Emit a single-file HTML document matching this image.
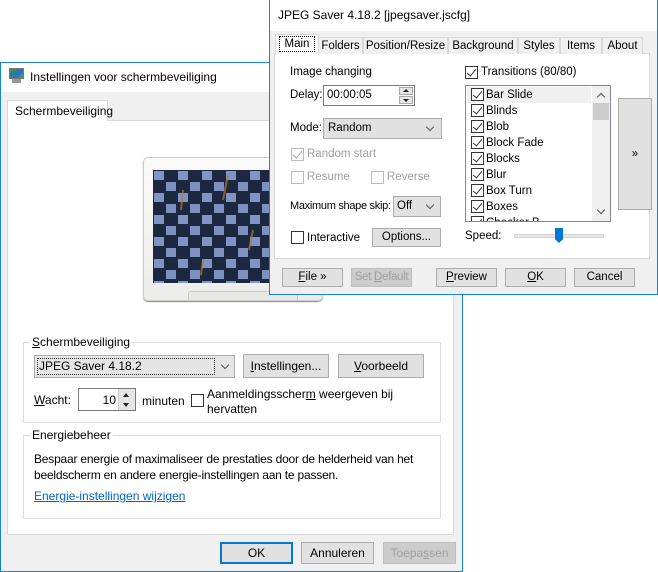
<!DOCTYPE html>
<html><head><meta charset="utf-8"><style>
*{box-sizing:border-box;margin:0;padding:0}
body{width:658px;height:572px;background:#fff;position:relative;overflow:hidden;font-family:"Liberation Sans",sans-serif;font-size:12px;color:#000}
.a{position:absolute;white-space:nowrap}
.btn{position:absolute;background:#e1e1e1;border:1px solid #adadad;text-align:center;line-height:18px;white-space:nowrap}
.cb{position:absolute;width:13px;height:13px;border:1px solid #333;background:#fff}
.ck::after{content:"";position:absolute;left:3px;top:0px;width:4px;height:8px;border:solid #333;border-width:0 1.5px 1.5px 0;transform:rotate(40deg)}
.dis{color:#a0a0a0}
.cbd{border-color:#bcbcbc}
.cbd.ck::after{border-color:#a8a8a8}
.tab{position:absolute;top:37px;height:17px;background:#f0f0f0;border:1px solid #d9d9d9;border-bottom:none;text-align:center;line-height:16px}
.chev{position:absolute;width:6px;height:6px;border:solid #555;border-width:0 1px 1px 0;transform:rotate(45deg)}
.li{position:absolute;left:471px;height:16px;line-height:16px;padding-left:15px}
.li::before{content:"";position:absolute;left:0;top:1px;width:13px;height:13px;border:1px solid #333;background:#fff;box-sizing:border-box}
.li::after{content:"";position:absolute;left:4px;top:2px;width:4px;height:8px;border:solid #333;border-width:0 1.5px 1.5px 0;transform:rotate(40deg)}
.fw{font-size:11.5px}
.bw{font-size:12px}
</style></head><body>

<!-- back window -->
<div class="a" style="left:0;top:62px;width:463px;height:510px;border:1px solid #1883d7;background:#f0f0f0"></div>
<div class="a" style="left:1px;top:63px;width:461px;height:29px;background:#fff"></div>
<div class="a" style="left:9px;top:68px;width:15px;height:11px;background:linear-gradient(135deg,#3a9a3a,#2a6ad0 60%,#49b04a);border:1px solid #777"></div>
<div class="a" style="left:12px;top:79px;width:9px;height:4px;background:#999"></div>
<div class="a" style="left:30px;top:70px;font-size:12px">Instellingen voor schermbeveiliging</div>
<div class="a" style="left:7px;top:120px;width:447px;height:415px;background:#fff;border:1px solid #d9d9d9"></div>
<div class="a bw" style="left:7px;top:100px;width:101px;height:21px;background:#fff;border:1px solid #d9d9d9;border-bottom:none;padding:3px 0 0 7px">Schermbeveiliging</div>

<!-- monitor -->
<div class="a" style="left:143px;top:157px;width:180px;height:144px;background:linear-gradient(#fbfbf9,#ecece8);border:1px solid #cfcfcc;border-radius:5px;box-shadow:0 1px 1px #888"></div>
<div class="a" style="left:188px;top:291px;width:110px;height:9px;background:#e8e8e6;border:1px solid #c8c8c8;border-bottom:none;border-radius:3px 3px 0 0"></div>
<svg class="a" style="left:153px;top:170px" width="130" height="113">
<defs><pattern id="p" width="24" height="22" patternUnits="userSpaceOnUse">
<rect width="24" height="22" fill="#1c2740"/>
<rect x="1" y="1" width="10" height="9" fill="#8094c6"/>
<rect x="13" y="12" width="10" height="9" fill="#7d90c0"/>
</pattern></defs>
<rect width="130" height="113" fill="url(#p)"/>
<path d="M75 5 L70 30 M30 20 L28 40 M100 60 L96 80 M50 90 L48 105" stroke="#b07a30" stroke-width="2" opacity=".7"/>
</svg>

<!-- group 1 -->
<div class="a" style="left:23px;top:342px;width:418px;height:81px;border:1px solid #dcdcdc"></div>
<div class="a bw" style="left:30px;top:335px;background:#fff;padding:0 2px"><u>S</u>chermbeveiliging</div>
<div class="a" style="left:34px;top:355px;width:201px;height:23px;background:#e5e5e5;border:1px solid #adadad"></div>
<div class="a bw" style="left:37px;top:358px;width:178px;height:17px;border:1px dotted #333;padding-left:1px;line-height:15px">JPEG Saver 4.18.2</div>
<div class="chev" style="left:222px;top:362px"></div>
<div class="btn bw" style="left:243px;top:354px;width:86px;height:24px;line-height:22px"><u>I</u>nstellingen...</div>
<div class="btn bw" style="left:338px;top:354px;width:86px;height:24px;line-height:22px"><u>V</u>oorbeeld</div>
<div class="a bw" style="left:34px;top:393px"><u>W</u>acht:</div>
<div class="a" style="left:78px;top:388px;width:58px;height:23px;border:1px solid #7a7a7a;background:#fff"></div>
<div class="a bw" style="left:84px;top:393px;width:32px;text-align:right">10</div>
<div class="a" style="left:118px;top:389px;width:17px;height:21px;background:#e5e5e5;border-left:1px solid #ccc"></div>
<div class="a" style="left:123px;top:393px;border:3px solid transparent;border-bottom:4px solid #222;border-top:none"></div>
<div class="a" style="left:123px;top:403px;border:3px solid transparent;border-top:4px solid #222;border-bottom:none"></div>
<div class="a bw" style="left:142px;top:394px">minuten</div>
<div class="cb" style="left:191px;top:394px"></div>
<div class="a bw" style="left:207px;top:387px;line-height:15px">Aanmeldingsscher<u>m</u> weergeven bij<br>hervatten</div>

<!-- group 2 -->
<div class="a" style="left:23px;top:435px;width:418px;height:84px;border:1px solid #dcdcdc"></div>
<div class="a bw" style="left:30px;top:428px;background:#fff;padding:0 2px">Energiebeheer</div>
<div class="a bw" style="left:34px;top:451px;line-height:16px;letter-spacing:-0.2px">Bespaar energie of maximaliseer de prestaties door de helderheid van het<br>beeldscherm en andere energie-instellingen aan te passen.</div>
<div class="a bw" style="left:34px;top:489px;color:#0066cc;text-decoration:underline">Energie-instellingen wijzigen</div>

<div class="btn bw" style="left:220px;top:542px;width:73px;height:22px;border:2px solid #0078d7;line-height:18px">OK</div>
<div class="btn bw" style="left:301px;top:542px;width:73px;height:22px;line-height:20px">Annuleren</div>
<div class="btn dis bw" style="left:383px;top:542px;width:73px;height:22px;line-height:20px;background:#ccc;border-color:#bfbfbf">Toepa<u>s</u>sen</div>

<!-- front window -->
<div class="a" style="left:269px;top:-1px;width:389px;height:296px;border:1px solid #1883d7;background:#f0f0f0"></div>
<div class="a" style="left:270px;top:0;width:387px;height:31px;background:#fff"></div>
<div class="a" style="left:278px;top:8px;font-size:12px">JPEG Saver 4.18.2 [jpegsaver.jscfg]</div>
<div class="a" style="left:274px;top:53px;width:376px;height:206px;background:#fff;border:1px solid #d9d9d9"></div>
<div class="fw">
<div class="tab" style="left:318px;width:45px">Folders</div>
<div class="tab" style="left:363px;width:85px">Position/Resize</div>
<div class="tab" style="left:448px;width:70px">Background</div>
<div class="tab" style="left:518px;width:42px">Styles</div>
<div class="tab" style="left:560px;width:42px">Items</div>
<div class="tab" style="left:602px;width:41px">About</div>
<div class="a" style="left:275px;top:34px;width:44px;height:21px;background:#fff;border:1px solid #d9d9d9;border-bottom:none"></div>
<div class="a" style="left:279px;top:36px;width:36px;height:16px;border:1px dotted #000;line-height:14px;text-align:center">Main</div>

<div class="a" style="left:290px;top:66px">Image changing</div>
<div class="a" style="left:290px;top:89px">Delay:</div>
<div class="a" style="left:323px;top:85px;width:92px;height:21px;border:1px solid #7a7a7a;background:#fff;padding:3px 0 0 3px">00:00:05</div>
<div class="a" style="left:398px;top:86px;width:16px;height:19px;background:#fff"></div>
<div class="a" style="left:399px;top:87px;width:14px;height:8px;background:#e5e5e5;border:1px solid #aaa"></div>
<div class="a" style="left:399px;top:96px;width:14px;height:8px;background:#e5e5e5;border:1px solid #aaa"></div>
<div class="a" style="left:403px;top:89px;border:3px solid transparent;border-bottom:3px solid #222;border-top:none"></div>
<div class="a" style="left:403px;top:99px;border:3px solid transparent;border-top:3px solid #222;border-bottom:none"></div>
<div class="a" style="left:290px;top:122px">Mode:</div>
<div class="a" style="left:323px;top:118px;width:119px;height:21px;background:#e1e1e1;border:1px solid #adadad;padding:3px 0 0 4px">Random</div>
<div class="chev" style="left:427px;top:124px"></div>
<div class="cb cbd ck" style="left:291px;top:148px"></div>
<div class="a dis" style="left:307px;top:148px">Random start</div>
<div class="cb cbd" style="left:291px;top:171px"></div>
<div class="a dis" style="left:307px;top:171px">Resume</div>
<div class="cb cbd" style="left:371px;top:171px"></div>
<div class="a dis" style="left:387px;top:171px">Reverse</div>
<div class="a" style="left:290px;top:200px;font-size:11px;letter-spacing:-0.3px">Maximum shape skip:</div>
<div class="a" style="left:393px;top:196px;width:48px;height:21px;background:#e1e1e1;border:1px solid #adadad;padding:3px 0 0 3px">Off</div>
<div class="chev" style="left:427px;top:202px"></div>
<div class="cb" style="left:291px;top:231px"></div>
<div class="a" style="left:307px;top:232px">Interactive</div>
<div class="btn" style="left:372px;top:228px;width:69px;height:19px;line-height:16px">Options...</div>

<div class="cb ck" style="left:465px;top:66px"></div>
<div class="a" style="left:481px;top:66px">Transitions (80/80)</div>
<div class="a" style="left:465px;top:85px;width:146px;height:137px;border:1px solid #828790;background:#fff"></div>
<div class="a" style="left:467px;top:87px;width:124px;height:16px;background:#f0f0f0"></div>
<div class="li" style="top:87px">Bar Slide</div>
<div class="li" style="top:103px">Blinds</div>
<div class="li" style="top:119px">Blob</div>
<div class="li" style="top:135px">Block Fade</div>
<div class="li" style="top:151px">Blocks</div>
<div class="li" style="top:167px">Blur</div>
<div class="li" style="top:183px">Box Turn</div>
<div class="li" style="top:199px">Boxes</div>
<div class="a" style="left:466px;top:215px;width:126px;height:6px;overflow:hidden"><div class="li" style="left:5px;top:0">Checker B</div></div>
<div class="a" style="left:592px;top:86px;width:18px;height:135px;background:#f0f0f0"></div>
<div class="chev" style="left:598px;top:94px;transform:rotate(225deg)"></div>
<div class="a" style="left:593px;top:103px;width:16px;height:17px;background:#cdcdcd"></div>
<div class="chev" style="left:598px;top:207px"></div>
<div class="btn" style="left:618px;top:98px;width:34px;height:112px;line-height:110px">»</div>
<div class="a" style="left:465px;top:230px">Speed:</div>
<div class="a" style="left:514px;top:234px;width:90px;height:4px;background:#e7e7e7;border:1px solid #d6d6d6"></div>
<div class="a" style="left:555px;top:228px;width:8px;height:15px;background:#0078d7;clip-path:polygon(0 0,100% 0,100% 75%,50% 100%,0 75%)"></div>

<div class="btn" style="left:282px;top:268px;width:61px;height:19px;line-height:17px"><u>F</u>ile »</div>
<div class="btn dis" style="left:351px;top:268px;width:61px;height:19px;line-height:17px;background:#ccc;border-color:#bfbfbf;letter-spacing:-0.3px">Set <u>D</u>efault</div>
<div class="btn" style="left:436px;top:268px;width:61px;height:19px;line-height:17px"><u>P</u>review</div>
<div class="btn" style="left:505px;top:268px;width:61px;height:19px;line-height:17px"><u>O</u>K</div>
<div class="btn" style="left:574px;top:268px;width:61px;height:19px;line-height:17px">Cancel</div>
</div>
</body></html>
